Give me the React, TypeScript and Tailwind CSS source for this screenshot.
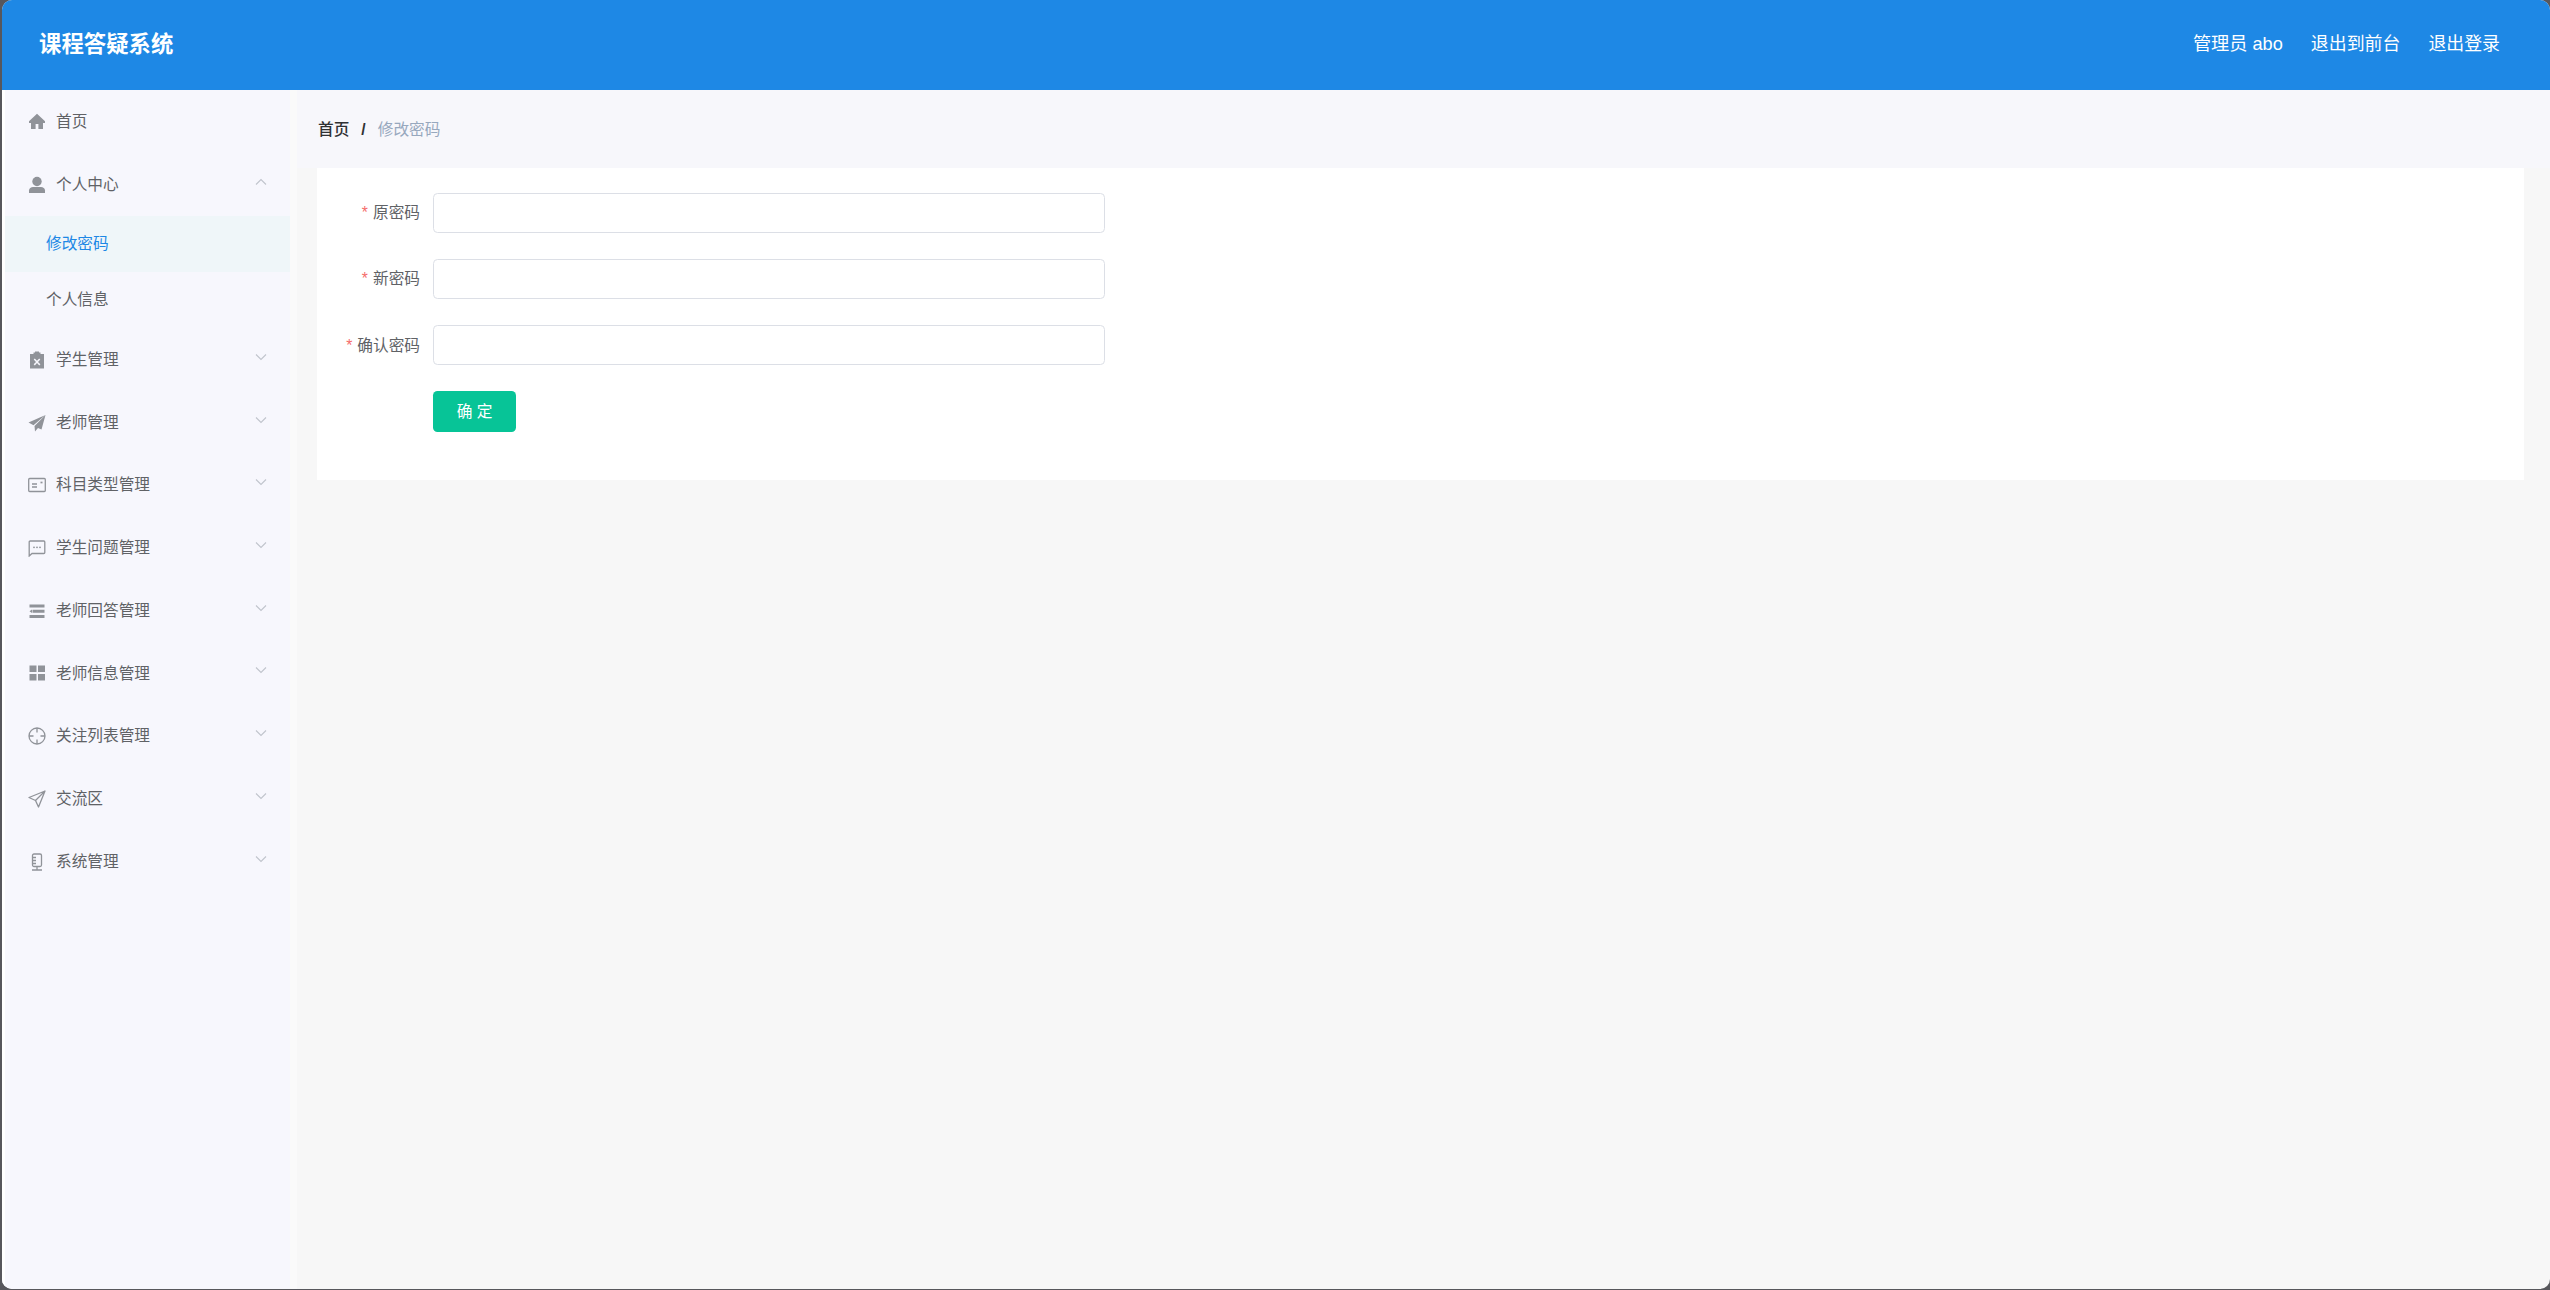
import { ReactNode } from "react";

const FONT = "[font-family:'Liberation_Sans','Noto_Sans_CJK_SC',sans-serif]";

const Icon = ({ children }: { children: ReactNode }) => (
  <svg viewBox="0 0 18 18" className="w-[18px] h-[18px] shrink-0 text-[#909399]" fill="currentColor">
    {children}
  </svg>
);

const icons: Record<string, ReactNode> = {
  home: <path d="M9 1.800 1 9.300v1.700h2V17h4.600v-5h2.800v5H15v-6h2V9.300z" />,
  user: (
    <>
      <circle cx="9" cy="5.500" r="4.700" />
      <path d="M1 17v-2.500C1 12.200 3 11 5 11h8c2 0 4 1.200 4 3.500V17z" />
    </>
  ),
  release: (
    <path
      fillRule="evenodd"
      d="M2 3h3.500V1.500H7V0.500h4v1h1.500V3H16v14.500H2zM6.800 7.500 5.700 8.600 8 11l-2.300 2.300 1.100 1.100L9 12.100l2.300 2.300 1.100-1.100L10 11l2.300-2.400-1.100-1.100L9 9.800z"
    />
  ),
  promotion: (
    <>
      <path d="M17.500 1 .5 8.500l5 2.700z" />
      <path d="M17.500 1 6.500 12l.5 5.500 3-3.500 3.500 1.500z" />
    </>
  ),
  postcard: (
    <g fill="none" stroke="currentColor" strokeWidth="1.300">
      <rect x=".7" y="2.500" width="16.600" height="13" rx="1" />
      <path d="M4 8h5M4 11h5" />
      <path d="M12.500 6.500h2" strokeWidth="1.700" />
    </g>
  ),
  chat: (
    <>
      <path
        fill="none"
        stroke="currentColor"
        strokeWidth="1.300"
        d="M1.200 17V3a1 1 0 0 1 1-1h13.600a1 1 0 0 1 1 1v10.500a1 1 0 0 1-1 1H4z"
      />
      <circle cx="6" cy="8.300" r=".9" />
      <circle cx="9" cy="8.300" r=".9" />
      <circle cx="12" cy="8.300" r=".9" />
    </>
  ),
  operation: (
    <path d="M1.500 2.500h15v3h-15zM4.500 7.800h12v3h-12zM1.500 9.300 4 7.500v3.600zM1.500 13h15v3h-15z" />
  ),
  grid: <path d="M1.500 1.500h7v6.500h-7zM10 1.500h7v6.500h-7zM1.500 10h7v6.500h-7zM10 10h7v6.500h-7z" />,
  aim: (
    <g fill="none" stroke="currentColor" strokeWidth="1.300">
      <circle cx="9" cy="9" r="8" />
      <path d="M9 1v4.500M9 12.500V17M1 9h4.500M12.500 9H17" />
    </g>
  ),
  position: (
    <path
      fill="none"
      stroke="currentColor"
      strokeWidth="1.300"
      strokeLinejoin="round"
      d="M17 1 1 7.500l6.500 3 3 6.500zM7.500 10.500 17 1"
    />
  ),
  microphone: (
    <g fill="none" stroke="currentColor" strokeWidth="1.300">
      <rect x="4.500" y="1" width="9" height="12.500" rx="1.500" />
      <path d="M4.500 4.500h3.500M4.500 7.500h3.500M4.500 10.500h3.500M9 13.500V17M4 17h10" />
    </g>
  ),
};

const Chevron = ({ up = false }: { up?: boolean }) => (
  <svg
    viewBox="0 0 12 8"
    className={`w-[12px] h-[8px] mb-[6px] text-[#c0c4cc] ${up ? "rotate-180" : ""}`}
    fill="none"
    stroke="currentColor"
    strokeWidth="1.100"
  >
    <path d="M1 1.500 6 6.500l5-5" />
  </svg>
);

const menus = [
  { icon: "release", label: "学生管理" },
  { icon: "promotion", label: "老师管理" },
  { icon: "postcard", label: "科目类型管理" },
  { icon: "chat", label: "学生问题管理" },
  { icon: "operation", label: "老师回答管理" },
  { icon: "grid", label: "老师信息管理" },
  { icon: "aim", label: "关注列表管理" },
  { icon: "position", label: "交流区" },
  { icon: "microphone", label: "系统管理" },
];

const MenuRow = ({ icon, label, open }: { icon: string; label: string; open?: boolean }) => (
  <div className="flex items-center h-[62.72px] pl-[23px] pr-[23px] text-[15.68px] text-[#606266] cursor-pointer">
    <Icon>{icons[icon]}</Icon>
    <span className="ml-[10px] flex-1">{label}</span>
    {open !== undefined && <Chevron up={open} />}
  </div>
);

const FormRow = ({ label }: { label: string }) => (
  <div className="flex items-center mb-[25.8px]">
    <label className="w-[115px] pr-[13px] text-right text-[15.68px] text-[#606266]">
      <span className="text-[#f56c6c] mr-[5px]">*</span>
      {label}
    </label>
    <input
      type="password"
      className="w-[672px] h-[40.3px] px-[17px] rounded-[4.5px] border border-[#dcdfe6] bg-white outline-none"
    />
  </div>
);

export default function App() {
  return (
    <div className={`h-screen w-screen overflow-hidden bg-[#57575c] pl-[2px] pb-[1px] ${FONT}`}>
      <div className="h-full flex flex-col overflow-hidden rounded-[10px] bg-[#f7f7f7]">
        {/* Header */}
        <header className="h-[90px] shrink-0 flex items-center justify-between bg-[#1e88e5] pl-[37px] pr-[50px] text-white">
          <h1 className="text-[22.4px] font-bold">课程答疑系统</h1>
          <div className="flex gap-[28px] text-[17.92px]">
            <span className="text-[18.2px]">管理员 abo</span>
            <a>退出到前台</a>
            <a>退出登录</a>
          </div>
        </header>

        <div className="flex-1 flex min-h-0">
          {/* Sidebar */}
          <aside className="w-[288px] shrink-0 pt-[1px] bg-[#f7f7fd] border-l-[3px] border-white">
            <div className="-mt-[1px] mb-[1px]">
              <MenuRow icon="home" label="首页" />
            </div>
            <MenuRow icon="user" label="个人中心" open />
            <div className="flex items-center h-[56px] pl-[41px] pb-[2px] text-[15.68px] text-[#1e88e5] bg-[#eff6f9]">
              修改密码
            </div>
            <div className="flex items-center h-[56px] pl-[41px] pb-[1px] text-[15.68px] text-[#606266]">
              个人信息
            </div>
            {menus.map(menu => (
              <MenuRow key={menu.label} icon={menu.icon} label={menu.label} open={false} />
            ))}
          </aside>

          {/* Main */}
          <main className="flex-1 min-w-0 border-l-[7px] border-[#fafafa] pr-[26px]">
            <nav className="h-[78px] -mr-[26px] flex items-center pl-[21px] pt-[2px] bg-[#f7f7fb] text-[15.68px]">
              <span className="font-medium text-[#303133]">首页</span>
              <span className="mx-[12px] font-bold text-[#303133]">/</span>
              <span className="text-[#97a8be]">修改密码</span>
            </nav>

            <section className="ml-[20px] h-[312px] bg-white pt-[25px] pl-[1px]">
              <FormRow label="原密码" />
              <FormRow label="新密码" />
              <FormRow label="确认密码" />
              <button className="ml-[115px] w-[83px] h-[40.3px] rounded-[4.5px] bg-[#07c497] text-white text-[15.68px]">
                确 定
              </button>
            </section>
          </main>
        </div>
      </div>
    </div>
  );
}
